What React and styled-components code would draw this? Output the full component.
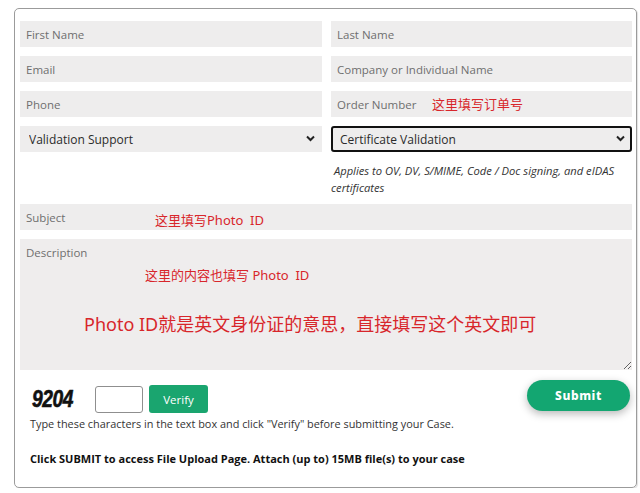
import styled, { createGlobalStyle } from "styled-components";

const GlobalStyle = createGlobalStyle`
	body {
		margin: 0;
		background: #fff;
		font-family: "Open Sans", "Noto Sans", sans-serif;
	}
`;

const Chevron = () => (
	<svg width="9" height="7" viewBox="0 0 9 7">
		<path d="M1 1.5 L4.5 5 L8 1.5" fill="none" stroke="#222" strokeWidth="2" />
	</svg>
);

export default function App() {
	return (
		<>
			<GlobalStyle />
			<Card>
				<Grid>
					<Field placeholder="First Name" />
					<Field placeholder="Last Name" />
					<Field placeholder="Email" />
					<Field placeholder="Company or Individual Name" />
					<Field placeholder="Phone" />
					<Cell>
						<Field placeholder="Order Number" />
						<Note $left={101} $top={6} $size={13}>
							这里填写订单号
						</Note>
					</Cell>
					<Cell>
						<Select defaultValue="vs">
							<option value="vs">Validation Support</option>
						</Select>
						<Arrow>
							<Chevron />
						</Arrow>
					</Cell>
					<Cell>
						<Select defaultValue="cv" $focused>
							<option value="cv">Certificate Validation</option>
						</Select>
						<Arrow>
							<Chevron />
						</Arrow>
					</Cell>
					<span />
					<Help>
						&nbsp;Applies to OV, DV, S/MIME, Code / Doc signing, and eIDAS
						certificates
					</Help>
				</Grid>
				<Cell>
					<Field placeholder="Subject" />
					<Note $left={135} $top={9} $size={13}>
						这里填写Photo&nbsp; ID
					</Note>
				</Cell>
				<Cell>
					<Area placeholder="Description" />
					<Note $left={125} $top={29} $size={13}>
						这里的内容也填写 Photo&nbsp; ID
					</Note>
					<Note $left={64} $top={75} $size={18}>
						Photo ID就是英文身份证的意思，直接填写这个英文即可
					</Note>
				</Cell>
				<Bottom>
					<Left>
						<Captcha>
							<Code>9204</Code>
							<CodeInput />
							<Verify>Verify</Verify>
						</Captcha>
						<Small>
							Type these characters in the text box and click "Verify" before
							submitting your Case.
						</Small>
						<Strong>
							Click SUBMIT to access File Upload Page. Attach (up to) 15MB
							file(s) to your case
						</Strong>
					</Left>
					<Submit>Submit</Submit>
				</Bottom>
			</Card>
		</>
	);
}

const Card = styled.div`
	box-sizing: border-box;
	width: 623px;
	height: 480px;
	margin: 8px 0 0 14px;
	padding: 11px 4px 0 5px;
	border: 1px solid #9b9b9b;
	border-radius: 5px;
	box-shadow: 1px 1px 1px rgba(0, 0, 0, 0.12);
	display: flex;
	flex-direction: column;
	gap: 9px;
`;

const Grid = styled.div`
	display: grid;
	grid-template-columns: 302px 301px;
	grid-template-rows: 26px 26px 26px 26px 34px;
	column-gap: 9px;
	row-gap: 9px;
	padding-top: 1px;
`;

const Cell = styled.div`
	position: relative;
	display: flex;
`;

const Field = styled.input`
	box-sizing: border-box;
	width: 100%;
	height: 26px;
	margin: 0;
	border: none;
	background: #eeeded;
	padding: 0 6px;
	font-family: "Open Sans", "Noto Sans", sans-serif;
	font-size: 11.5px;
	color: #333;
	outline: none;
	&::placeholder {
		color: #6f6f6f;
	}
`;

const Select = styled.select`
	appearance: none;
	box-sizing: border-box;
	width: 100%;
	height: 26px;
	margin: 0;
	background: #eeeded;
	padding: 0 0 0 ${(p) => (p.$focused ? "7px" : "9px")};
	border: ${(p) => (p.$focused ? "2px solid #111" : "none")};
	border-radius: ${(p) => (p.$focused ? "3px" : "0")};
	font-family: "Open Sans", "Noto Sans", sans-serif;
	font-size: 12px;
	color: #2b2b2b;
	outline: none;
`;

const Arrow = styled.span`
	position: absolute;
	right: 7px;
	top: 9px;
	display: flex;
	pointer-events: none;
`;

const Help = styled.div`
	font-family: "Open Sans", "Noto Sans", sans-serif;
	font-size: 11.2px;
	font-style: italic;
	line-height: 17px;
	color: #333;
	padding-top: 1px;
`;

const Area = styled.textarea`
	box-sizing: border-box;
	width: 100%;
	height: 131px;
	margin: 0;
	border: none;
	background: #efeded;
	padding: 6px 6px;
	font-family: "Open Sans", "Noto Sans", sans-serif;
	font-size: 11.5px;
	outline: none;
	resize: vertical;
	&::placeholder {
		color: #6f6f6f;
	}
`;

const Note = styled.span`
	position: absolute;
	left: ${(p) => p.$left}px;
	top: ${(p) => p.$top}px;
	font-family: "Noto Sans", "Noto Sans CJK SC", sans-serif;
	font-size: ${(p) => p.$size}px;
	line-height: 1.2;
	color: #d8262b;
	white-space: nowrap;
	pointer-events: none;
`;

const Bottom = styled.div`
	display: flex;
	justify-content: space-between;
	align-items: flex-start;
	padding-top: 1px;
`;

const Left = styled.div`
	display: flex;
	flex-direction: column;
	padding: 5px 0 0 10px;
`;

const Captcha = styled.div`
	display: flex;
	align-items: center;
	gap: 6px;
`;

const Code = styled.span`
	display: inline-block;
	width: 57px;
	font-family: "Liberation Sans", sans-serif;
	font-size: 24px;
	font-weight: 700;
	font-style: italic;
	letter-spacing: -0.5px;
	color: #111;
	transform: scaleX(0.8);
	transform-origin: left center;
	margin-left: 2px;
	-webkit-text-stroke: 0.6px #111;
`;

const CodeInput = styled.input`
	box-sizing: border-box;
	width: 48px;
	height: 27px;
	margin: 0;
	border: 1px solid #8f8f8f;
	border-radius: 3px;
	background: #fff;
`;

const Verify = styled.button`
	width: 59px;
	height: 28px;
	border: none;
	border-radius: 3px;
	background: #1aa56f;
	color: #fff;
	font-family: "Open Sans", "Noto Sans", sans-serif;
	font-size: 11.5px;
	padding: 0;
`;

const Small = styled.div`
	margin-top: 3px;
	font-size: 10.9px;
	line-height: 16px;
	color: #333;
`;

const Strong = styled.div`
	margin-top: 19px;
	font-size: 11px;
	line-height: 16px;
	font-weight: 700;
	color: #111;
`;

const Submit = styled.button`
	width: 103px;
	height: 31px;
	margin-right: 2px;
	border: none;
	border-radius: 16px;
	background: #13a671;
	color: #fff;
	font-family: "Noto Sans", sans-serif;
	font-size: 12px;
	font-weight: 800;
	letter-spacing: 0.6px;
	box-shadow: 0 3px 8px rgba(0, 0, 0, 0.28);
`;
